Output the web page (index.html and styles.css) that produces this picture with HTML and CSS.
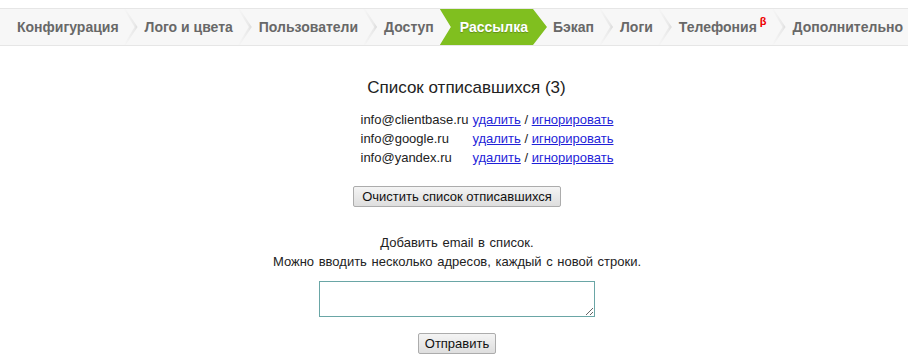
FILE: index.html
```html
<!DOCTYPE html>
<html lang="ru">
<head>
<meta charset="utf-8">
<title>Рассылка</title>
<link rel="stylesheet" href="styles.css">
</head>
<body>
<nav class="tabs">
  <ul class="tabs-list">
    <li class="tab">Конфигурация</li>
    <li class="tab">Лого и цвета</li>
    <li class="tab">Пользователи</li>
    <li class="tab">Доступ</li>
    <li class="tab tab--active">Рассылка</li>
    <li class="tab">Бэкап</li>
    <li class="tab">Логи</li>
    <li class="tab">Телефония<sup class="beta">β</sup></li>
    <li class="tab">Дополнительно</li>
  </ul>
</nav>
<main class="content">
  <h2 class="title">Список отписавшихся (3)</h2>
  <table class="unsub-table">
    <tr><td class="email">info@clientbase.ru</td><td><a href="#" class="link">удалить</a> / <a href="#" class="link">игнорировать</a></td></tr>
    <tr><td class="email">info@google.ru</td><td><a href="#" class="link">удалить</a> / <a href="#" class="link">игнорировать</a></td></tr>
    <tr><td class="email">info@yandex.ru</td><td><a href="#" class="link">удалить</a> / <a href="#" class="link">игнорировать</a></td></tr>
  </table>
  <button class="btn btn--clear" type="button">Очистить список отписавшихся</button>
  <p class="hint">Добавить email в список.<br>Можно вводить несколько адресов, каждый с новой строки.</p>
  <textarea class="emails-input"></textarea>
  <button class="btn btn--send" type="button">Отправить</button>
</main>
</body>
</html>
```

FILE: styles.css
```css
html, body {
  background: #fff;
}
body {
  margin: 8px 0 0;
  font-family: "Liberation Sans", Arial, sans-serif;
  color: #222;
}
.tabs {
  background: #f7f7f7;
  border-top: 1px solid #e6e6e6;
  border-bottom: 1px solid #e6e6e6;
  height: 36px;
  overflow: hidden;
}
.tabs-list {
  display: flex;
  list-style: none;
  margin: 0;
  padding: 0;
  height: 36px;
}
.tab {
  position: relative;
  display: flex;
  align-items: center;
  padding: 0 6px 0 20px;
  font-weight: bold;
  font-size: 14px;
  color: #686868;
  white-space: nowrap;
}
.tab:first-child {
  padding-left: 17px;
}
.tab:not(:first-child)::before {
  content: "";
  position: absolute;
  left: -1px;
  top: 0;
  width: 15px;
  height: 100%;
  background: linear-gradient(to right, #f7f7f7, #e9e9e9 70%, #d6d6d6);
  clip-path: polygon(0 0, 2px 0, 14px 50%, 2px 100%, 0 100%, 11px 50%);
}
.tab--active {
  background: #80bf1f;
  color: #fff;
  padding-right: 19px;
  margin-right: -14px;
  z-index: 1;
  text-shadow: 0 1px 1px rgba(0, 0, 0, 0.25);
  clip-path: polygon(0 0, calc(100% - 14px) 0, 100% 50%, calc(100% - 14px) 100%, 0 100%, 11px 50%);
}
.tab--active::before {
  display: none;
}
.beta {
  color: #e00;
  font-size: 11px;
  font-weight: bold;
  margin-left: 3px;
  align-self: flex-start;
  margin-top: 7px;
  line-height: 1;
}
.content {
  display: flex;
  flex-direction: column;
  align-items: center;
  padding-left: 6px;
  font-size: 13px;
}
.title {
  font-size: 17px;
  font-weight: normal;
  line-height: 19px;
  margin: 32px 0 0 19px;
  color: #222;
}
.unsub-table {
  margin: 13px 0 0 60px;
  border-collapse: collapse;
  font-size: 13px;
}
.unsub-table td {
  padding: 0;
  line-height: 19px;
}
.unsub-table .email {
  padding-right: 4px;
}
.link {
  color: #1f1fd8;
  text-decoration: underline;
}
.btn {
  font-family: "Liberation Sans", Arial, sans-serif;
  font-size: 13px;
  line-height: 15px;
  color: #111;
  padding: 2px 8px;
  border: 1px solid #acacac;
  border-radius: 2px;
  background: linear-gradient(#f4f4f4, #dedede);
  display: block;
}
.btn--clear {
  margin-top: 19px;
}
.btn--send {
  margin-top: 16px;
  padding: 2px 6px;
}
.hint {
  margin: 26px 0 0;
  line-height: 19px;
  text-align: center;
  word-spacing: 1px;
}
.emails-input {
  display: block;
  margin-top: 10px;
  width: 276px;
  height: 36px;
  box-sizing: border-box;
  border: 1px solid #6aa6a6;
  padding: 2px;
  font-family: "Liberation Sans", Arial, sans-serif;
  font-size: 13px;
}
```
